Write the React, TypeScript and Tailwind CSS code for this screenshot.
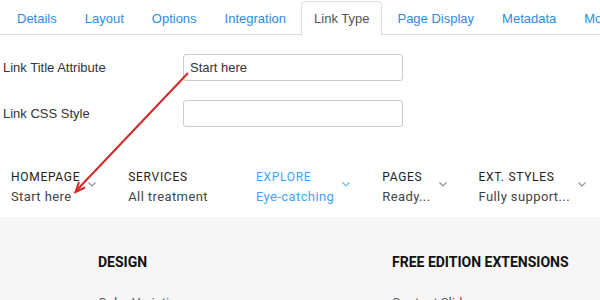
const tabs = ["Details", "Layout", "Options", "Integration", "Link Type", "Page Display", "Metadata", "Module Assignment"];

const menu = [
  { title: "HOMEPAGE", sub: "Start here", active: false, chevron: true },
  { title: "SERVICES", sub: "All treatment", active: false, chevron: false },
  { title: "EXPLORE", sub: "Eye-catching", active: true, chevron: true },
  { title: "PAGES", sub: "Ready...", active: false, chevron: true },
  { title: "EXT. STYLES", sub: "Fully support...", active: false, chevron: true },
];

function Chevron({ color, hidden }: { color: string; hidden?: boolean }) {
  return (
    <svg width="8" height="5" viewBox="0 0 8 5" className={`ml-[8px] mt-[14px] shrink-0 ${hidden ? "invisible" : ""}`}>
      <path d="M0.5 0.5 L4 4 L7.5 0.5" fill="none" stroke={color} strokeWidth="1.1" />
    </svg>
  );
}

export default function App() {
  return (
    <div className="relative w-[600px] h-[300px] overflow-hidden bg-white font-['Liberation_Sans',Arial,sans-serif]">
      {/* tabs */}
      <div className="flex pl-[4px] pt-[1px] border-b border-[#ddd] h-[35px] whitespace-nowrap">
        {tabs.map((t) => {
          const active = t === "Link Type";
          return (
            <div
              key={t}
              className={`mr-[2px] px-3 h-[35px] flex items-center text-[13px] border border-b-0 rounded-t-[4px] ${
                active ? "bg-white border-[#ddd] text-[#555] mb-[-1px]" : "border-transparent text-[#2f8be0]"
              }`}
            >
              {t}
            </div>
          );
        })}
      </div>

      {/* form */}
      <div className="pl-[3px] pt-[19px] flex flex-col gap-[19px] text-[13px] text-[#333]">
        <div className="flex items-center">
          <label className="w-[180px]">Link Title Attribute</label>
          <div className="w-[220px] h-[27px] border border-[#ccc] rounded-[3px] px-[6px] flex items-center text-[#333]">
            Start here
          </div>
        </div>
        <div className="flex items-center">
          <label className="w-[180px]">Link CSS Style</label>
          <div className="w-[220px] h-[27px] border border-[#ccc] rounded-[3px]" />
        </div>
      </div>

      {/* menu */}
      <div className="mt-[41px] pl-[11px] flex gap-[32px] font-['Roboto',sans-serif] h-[49px] whitespace-nowrap">
        {menu.map((m) => (
          <div key={m.title} className="flex items-start">
            <div>
              <div className={`text-[12px] leading-[18px] tracking-[0.7px] ${m.active ? "text-[#42a5f5]" : "text-[#222]"}`}>
                {m.title}
              </div>
              <div className={`text-[13px] leading-[22px] tracking-[0.4px] ${m.active ? "text-[#42a5f5]" : "text-[#444]"}`}>
                {m.sub}
              </div>
            </div>
            <Chevron color={m.active ? "#64b5f6" : "#8a8f9c"} hidden={!m.chevron} />
          </div>
        ))}
      </div>

      {/* footer section */}
      <div className="bg-[#f6f6f6] h-[100px] font-['Roboto',sans-serif] pt-[35px]">
        <div className="flex">
          <div className="pl-[98px] w-[392px]">
            <div className="text-[14px] leading-[20px] font-bold text-[#111]">DESIGN</div>
            <div className="mt-[21px] text-[13px] text-[#555]">Color Variations</div>
          </div>
          <div>
            <div className="text-[14px] leading-[20px] font-bold text-[#111]">FREE EDITION EXTENSIONS</div>
            <div className="mt-[21px] text-[13px] text-[#555]">Content Slider</div>
          </div>
        </div>
      </div>

      {/* annotation arrow */}
      <svg className="absolute inset-0 pointer-events-none" width="600" height="300" viewBox="0 0 600 300">
        <line x1="188" y1="73" x2="76" y2="191" stroke="#d02828" strokeWidth="2" />
        <polyline points="85,187.5 75.5,192 79,182" fill="none" stroke="#d02828" strokeWidth="2" strokeLinejoin="miter" />
      </svg>
    </div>
  );
}
